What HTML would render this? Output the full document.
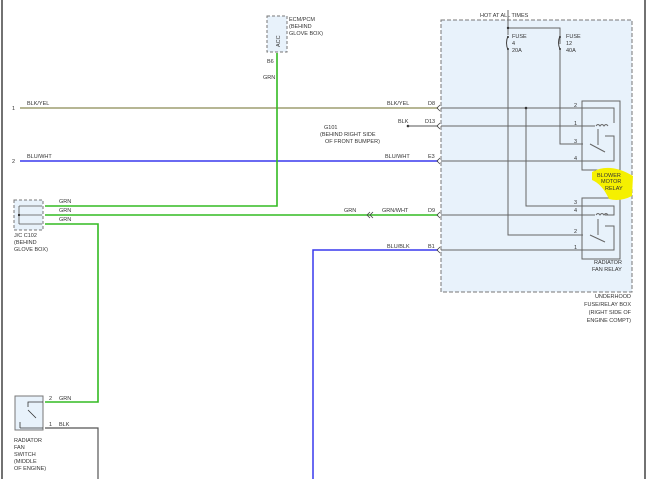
<!DOCTYPE html>
<html><head><meta charset="utf-8"><style>
html,body{margin:0;padding:0;background:#fff;width:650px;height:479px;overflow:hidden}
svg text{font-family:"Liberation Sans",sans-serif;font-size:5.5px;fill:#333}
</style></head><body>
<svg width="650" height="479" viewBox="0 0 650 479" xmlns="http://www.w3.org/2000/svg">
<line x1="2" y1="0" x2="2" y2="479" stroke="#444" stroke-width="1.5"/>
<line x1="645" y1="0" x2="645" y2="479" stroke="#444" stroke-width="1.5"/>
<!-- fuse box -->
<rect x="441" y="20" width="191" height="272" fill="#e8f2fb" stroke="#777" stroke-dasharray="4,2"/>
<text x="480" y="17">HOT AT ALL TIMES</text>
<line x1="508" y1="10" x2="508" y2="28" stroke="#666"/>
<g fill="none" stroke="#666" stroke-width="1">
<path d="M508 28H560V44M560 49V144H583"/>
<path d="M508 28V35M508 50V235H583"/>
<path d="M526 108V206H583"/>
<path d="M441 108H583M441 126H583M441 161H583M441 215H583M441 250H583"/>
<rect x="582" y="101" width="38" height="69"/>
<rect x="582" y="198" width="38" height="61"/>
<path d="M583 108H605M583 126H595M605 108H614V123M596 126q2 -3 4 0q2 -3 4 0q2 -3 4 0"/>
<path d="M583 161H614V136H605M590 144L605 152M598 129V145" />
<path d="M583 206H614V215H605M583 215H595M596 215q2 -3 4 0q2 -3 4 0q2 -3 4 0"/>
<path d="M583 250H614V226H605M590 235L605 242M598 219V235"/>
</g>
<path d="M508 36q-3 7 0 14M560 36q-3 7 0 13" stroke="#444" fill="none"/>
<g fill="#333"><circle cx="508" cy="28" r="1.2"/><circle cx="526" cy="108" r="1.3"/><circle cx="408" cy="126" r="1.3"/><circle cx="508" cy="37" r="1"/><circle cx="508" cy="49" r="1"/><circle cx="560" cy="37" r="1"/><circle cx="560" cy="49" r="1"/></g>
<text x="512" y="38">FUSE</text><text x="512" y="45">4</text><text x="512" y="52">20A</text>
<text x="566" y="38">FUSE</text><text x="566" y="45">12</text><text x="566" y="52">40A</text>
<g font-size="5"><text x="574" y="107">2</text><text x="574" y="125">1</text><text x="574" y="143">3</text><text x="574" y="160">4</text>
<text x="574" y="204">3</text><text x="574" y="212">4</text><text x="574" y="233">2</text><text x="574" y="249">1</text></g>
<path d="M592 172 Q610 162 633 176 L632 196 Q620 202 609 199 Q602 184 592 180Z" fill="#f5f000"/>
<text x="597" y="177">BLOWER</text><text x="601" y="183">MOTOR</text><text x="605" y="190">RELAY</text>
<text x="594" y="264">RADIATOR</text><text x="592" y="271">FAN RELAY</text>
<g text-anchor="end"><text x="631" y="298">UNDERHOOD</text><text x="631" y="306">FUSE/RELAY BOX</text><text x="631" y="314">(RIGHT SIDE OF</text><text x="631" y="322">ENGINE COMPT)</text></g>
<!-- ECM -->
<rect x="267" y="16" width="20" height="36" fill="#e8f2fb" stroke="#777" stroke-dasharray="3,2"/>
<text x="280" y="47" transform="rotate(-90 280 47)" font-size="5">ACC</text>
<text x="289" y="21">ECM/PCM</text><text x="289" y="28">(BEHIND</text><text x="289" y="35">GLOVE BOX)</text>
<text x="267" y="63">B6</text><text x="263" y="79">GRN</text>
<!-- wires -->
<line x1="20" y1="108" x2="438" y2="108" stroke="#8b8a55" stroke-width="1.3"/>
<line x1="20" y1="161" x2="438" y2="161" stroke="#3838ee" stroke-width="1.5"/>
<line x1="408" y1="126" x2="438" y2="126" stroke="#555"/>
<path d="M277 53V206H45" stroke="#33bb22" stroke-width="1.6" fill="none"/>
<line x1="45" y1="215" x2="438" y2="215" stroke="#33bb22" stroke-width="1.6"/>
<path d="M45 224H98V402H45" stroke="#33bb22" stroke-width="1.6" fill="none"/>
<path d="M313 479V250H438" stroke="#3838ee" stroke-width="1.5" fill="none"/>
<path d="M45 428H98V479" stroke="#555" stroke-width="1.2" fill="none"/>
<g fill="none" stroke="#444" stroke-width=".8">
<path d="M440 105l-3 3l3 3M440 123l-3 3l3 3M440 158l-3 3l3 3M440 212l-3 3l3 3M440 247l-3 3l3 3"/>
<path d="M370 212l-3 3l3 3M373 212l-3 3l3 3"/>
</g>
<text x="12" y="110">1</text><text x="27" y="105">BLK/YEL</text>
<text x="12" y="163">2</text><text x="27" y="158">BLU/WHT</text>
<text x="387" y="105">BLK/YEL</text><text x="428" y="105">D8</text>
<text x="398" y="123">BLK</text><text x="425" y="123">D13</text>
<text x="324" y="129">G101</text><text x="320" y="136">(BEHIND RIGHT SIDE</text><text x="325" y="143">OF FRONT BUMPER)</text>
<text x="385" y="158">BLU/WHT</text><text x="428" y="158">E3</text>
<text x="344" y="212">GRN</text><text x="382" y="212">GRN/WHT</text><text x="428" y="212">D9</text>
<text x="387" y="248">BLU/BLK</text><text x="428" y="248">B1</text>
<!-- J/C -->
<rect x="14" y="200" width="29" height="30" fill="#e8f2fb" stroke="#777" stroke-dasharray="3,2"/>
<path d="M19 206V224M19 206H42M19 215H42M19 224H42" stroke="#555" fill="none" stroke-width=".8"/>
<circle cx="19" cy="215" r="1.1" fill="#222"/>
<text x="59" y="203">GRN</text><text x="59" y="212">GRN</text><text x="59" y="221">GRN</text>
<text x="14" y="237">J/C C102</text><text x="14" y="244">(BEHIND</text><text x="14" y="251">GLOVE BOX)</text>
<!-- switch -->
<rect x="15" y="396" width="28" height="34" fill="#e8f2fb" stroke="#777"/>
<path d="M43 402H28V407M28 410L36 418M20 428H43M20 428V422" stroke="#333" fill="none" stroke-width=".8"/>
<text x="49" y="400">2</text><text x="59" y="400">GRN</text>
<text x="49" y="426">1</text><text x="59" y="426">BLK</text>
<text x="14" y="442">RADIATOR</text><text x="14" y="449">FAN</text><text x="14" y="456">SWITCH</text><text x="14" y="463">(MIDDLE</text><text x="14" y="470">OF ENGINE)</text>
</svg>
</body></html>
